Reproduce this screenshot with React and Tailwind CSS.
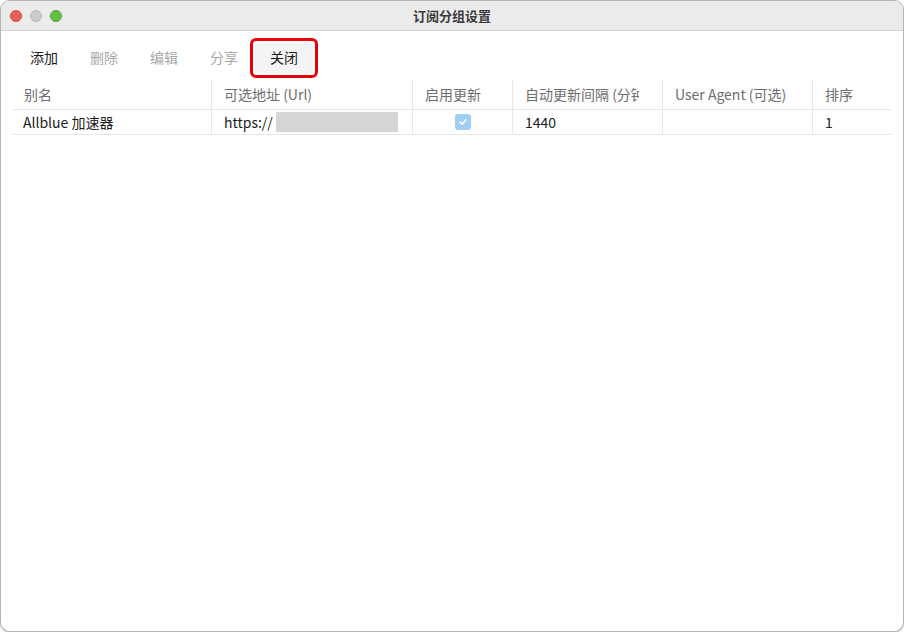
const FONT = { fontFamily: '"PingFang SC", "Noto Sans CJK SC", "Liberation Sans", sans-serif' };

const columns = [
  { key: 'name', label: '别名', w: 'w-[199px]' },
  { key: 'url', label: '可选地址 (Url)', w: 'w-[201px]' },
  { key: 'enabled', label: '启用更新', w: 'w-[100px]' },
  { key: 'interval', label: '自动更新间隔 (分钟)', w: 'w-[150px]' },
  { key: 'ua', label: 'User Agent (可选)', w: 'w-[150px]' },
  { key: 'order', label: '排序', w: 'flex-1' },
];

const toolbar = [
  { label: '添加', enabled: true },
  { label: '删除', enabled: false },
  { label: '编辑', enabled: false },
  { label: '分享', enabled: false },
];

const CheckBox = () => (
  <span className="w-4 h-4 rounded-[3px] bg-[#9fcdf6] flex items-center justify-center">
    <svg width="10" height="10" viewBox="0 0 10 10" fill="none">
      <path d="M2 5.2 L4.2 7.2 L8 2.8" stroke="white" strokeWidth="1.6" strokeLinecap="round" strokeLinejoin="round" />
    </svg>
  </span>
);

export default function App() {
  return (
    <div className="w-[904px] h-[632px] bg-white" style={FONT}>
      <div className="w-full h-full flex flex-col rounded-[10px] border border-[#b4b4b4] overflow-hidden bg-white shadow-[0_1px_2px_rgba(0,0,0,0.25)]">
        {/* Title bar */}
        <div className="h-[30px] shrink-0 bg-[#ebebeb] border-b border-[#d2d2d2] flex items-center relative">
          <div className="flex items-center gap-[8px] pl-[9px]">
            <span className="w-3 h-3 rounded-full bg-[#ec5f57] border border-[#d8493f]" />
            <span className="w-3 h-3 rounded-full bg-[#cbcbcb] border border-[#b9b9b9]" />
            <span className="w-3 h-3 rounded-full bg-[#61c03f] border border-[#4ea733]" />
          </div>
          <div className="absolute inset-0 flex items-center justify-center text-[13px] font-semibold text-[#3a3a3a] pointer-events-none">
            订阅分组设置
          </div>
        </div>

        {/* Toolbar */}
        <div className="flex items-center pl-[15px] pt-[6px] h-[48px] shrink-0">
          {toolbar.map(b => (
            <button
              key={b.label}
              className={`w-[56px] h-[32px] mr-[4px] pb-[2px] text-[14px] ${b.enabled ? 'text-[#1a1a1a]' : 'text-[#a8a8a8]'}`}
            >
              {b.label}
            </button>
          ))}
          <div className="ml-[-6px] w-[68px] h-[40px] rounded-[6px] border-[3px] border-[#e8000b] flex items-center justify-center">
            <button className="w-[58px] h-[30px] pb-[2px] rounded-[4px] bg-[#f4f4f4] text-[14px] text-[#1a1a1a]">关闭</button>
          </div>
        </div>

        {/* Table */}
        <div className="mx-[11px] mt-[1px]">
          <div className="flex h-[30px] border-b border-[#e6e6e6]">
            {columns.map((c, i) => (
              <div
                key={c.key}
                className={`${c.w} shrink-0 flex items-center pl-[12px] pr-[23px] text-[14px] text-[#6e6e6e] whitespace-nowrap overflow-hidden ${i > 0 ? 'border-l border-[#e6e6e6]' : ''}`}
              >
                <span className="overflow-hidden">{c.label}</span>
              </div>
            ))}
          </div>
          <div className="flex h-[25px] border-b border-[#e6e6e6] text-[14px] text-[#1c1c1c]">
            <div className="w-[199px] shrink-0 flex items-center px-[11px]">Allblue 加速器</div>
            <div className="w-[201px] shrink-0 flex items-center pl-[12px] border-l border-[#e6e6e6]">
              <span>https://</span>
              <span className="ml-[3px] w-[122px] h-[20px] bg-[#d5d5d5]" />
            </div>
            <div className="w-[100px] shrink-0 flex items-center justify-center border-l border-[#e6e6e6]">
              <CheckBox />
            </div>
            <div className="w-[150px] shrink-0 flex items-center px-[12px] border-l border-[#e6e6e6]">1440</div>
            <div className="w-[150px] shrink-0 flex items-center px-[11px] border-l border-[#e6e6e6]" />
            <div className="flex-1 flex items-center px-[12px] border-l border-[#e6e6e6]">1</div>
          </div>
        </div>
      </div>
    </div>
  );
}
